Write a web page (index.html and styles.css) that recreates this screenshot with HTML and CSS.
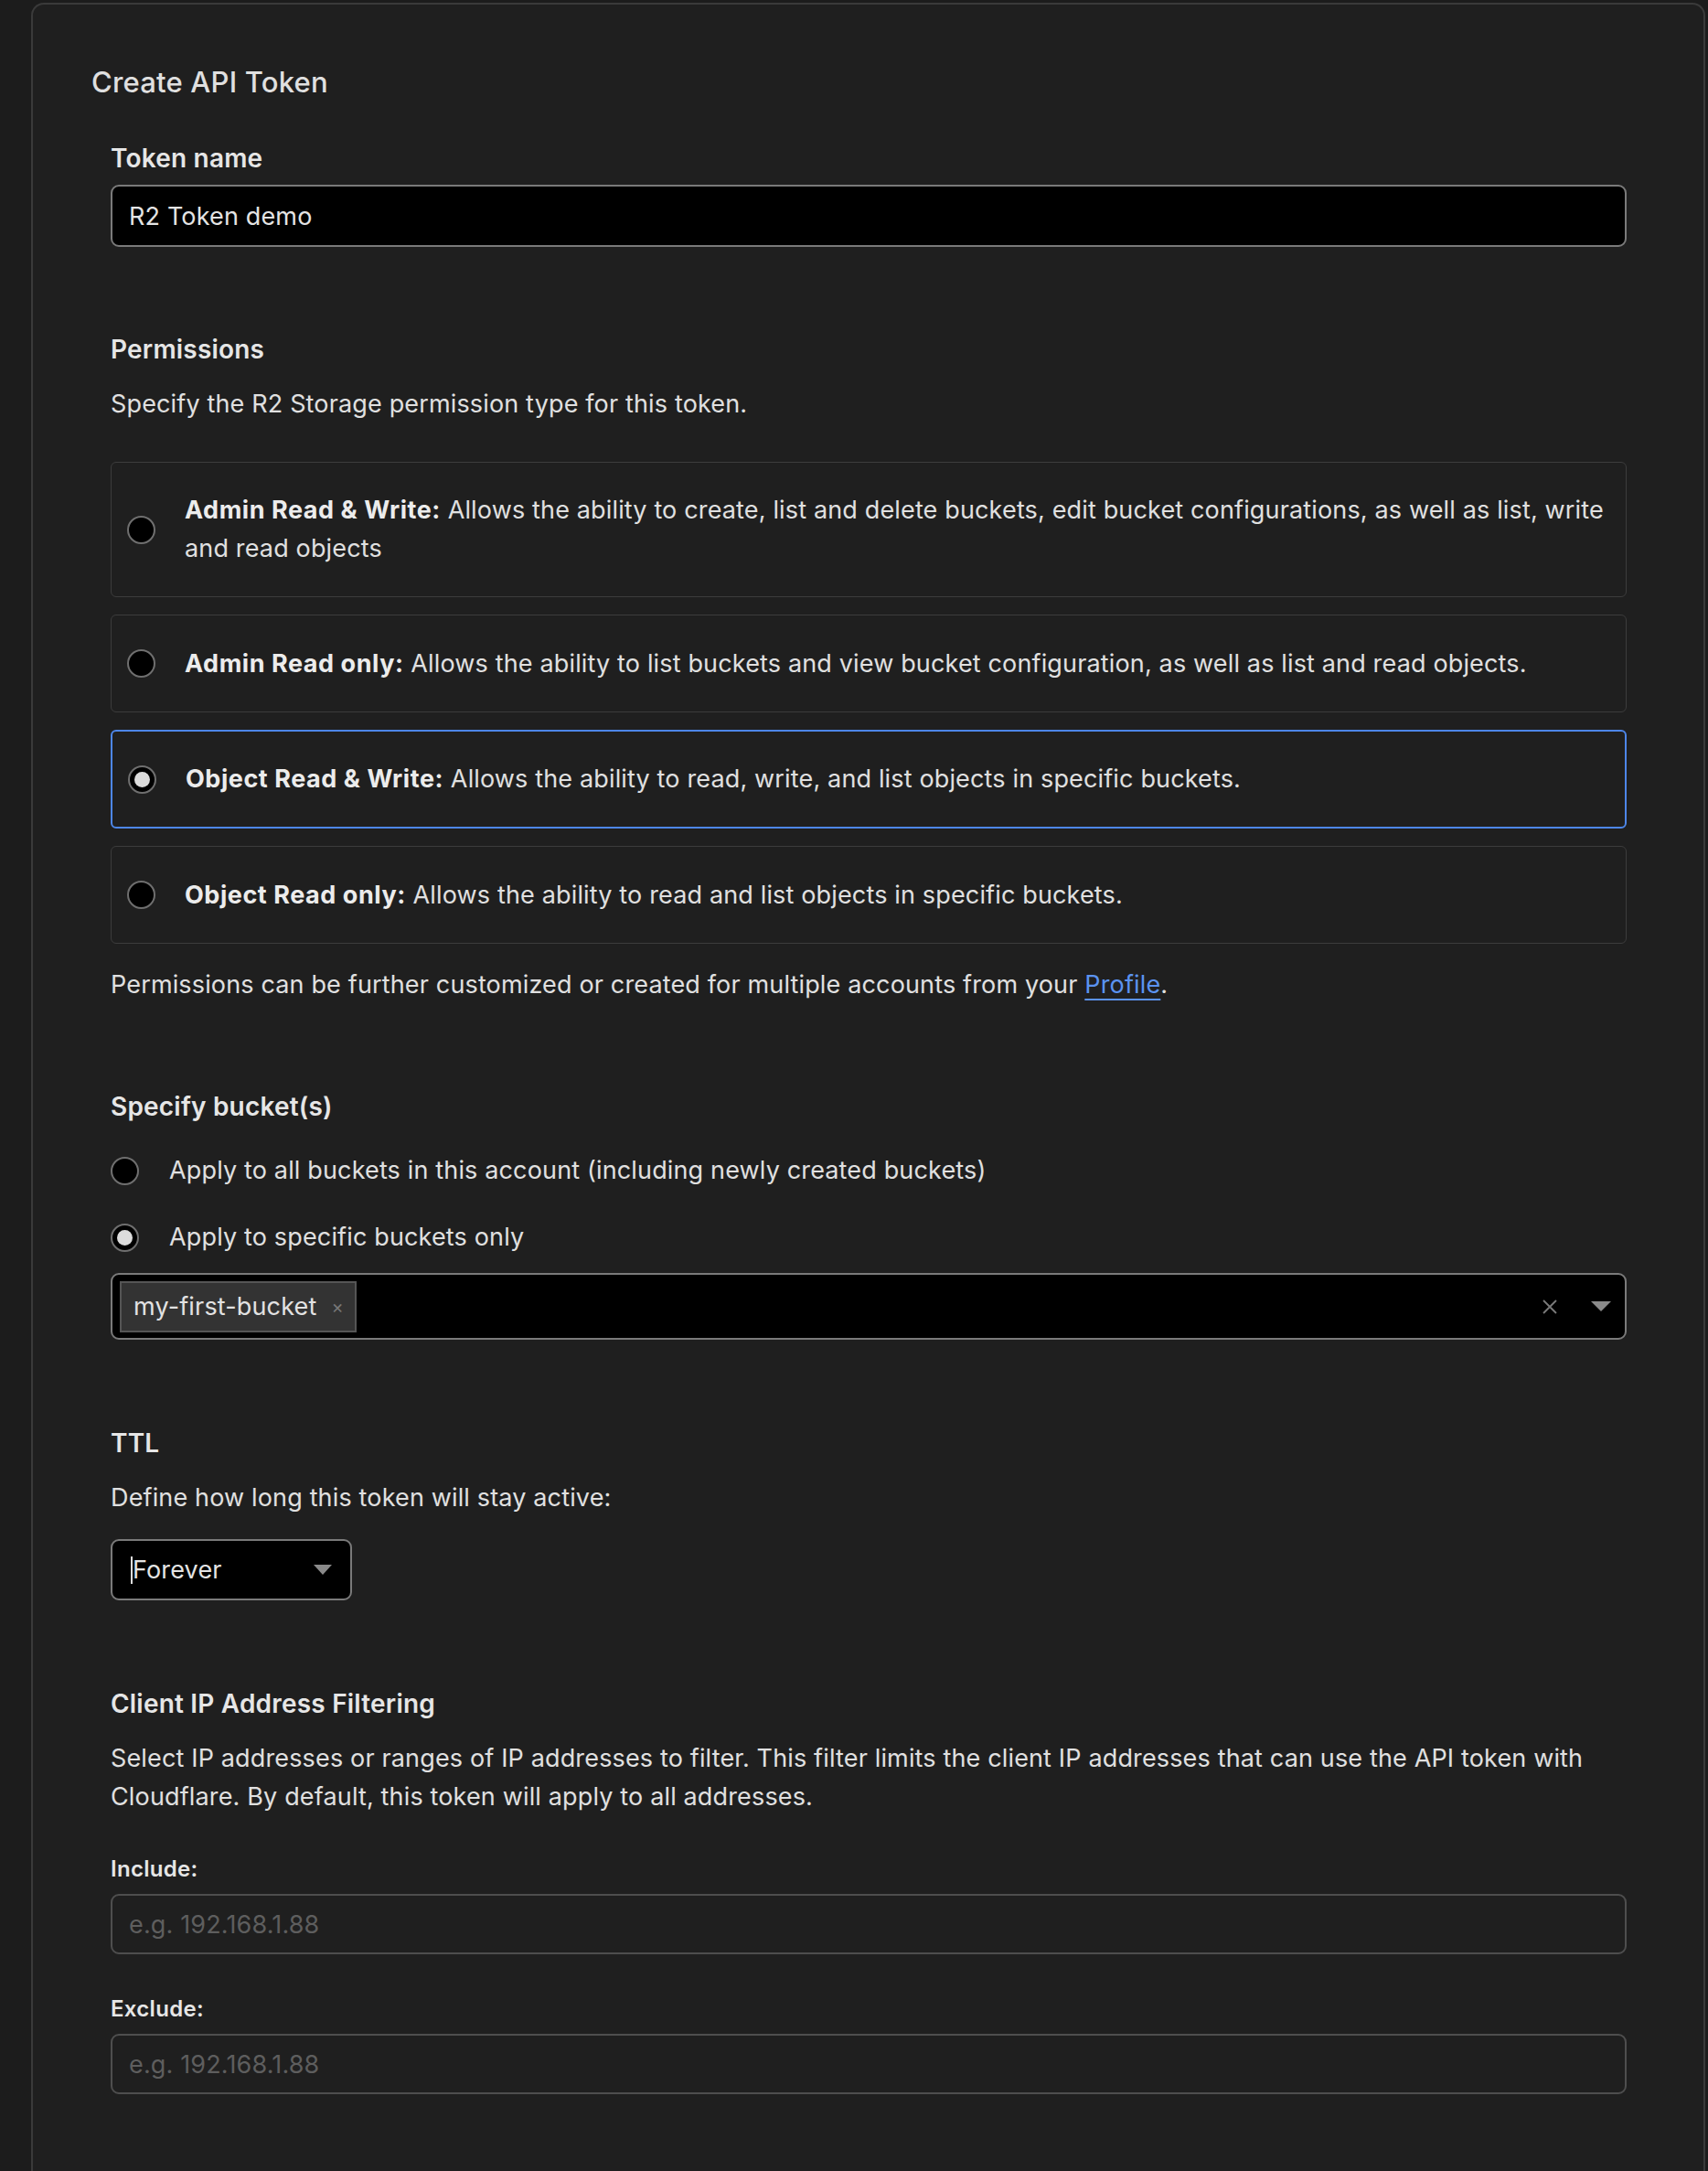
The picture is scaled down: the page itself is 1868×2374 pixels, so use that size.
FILE: index.html
```html
<!DOCTYPE html>
<html>
<head>
<meta charset="utf-8">
<link rel="stylesheet" href="styles.css">
</head>
<body>
<div class="card">
  <h1 class="title">Create API Token</h1>
  <div class="form">
    <div class="label mt-title">Token name</div>
    <div class="input input-dark mt-input">R2 Token demo</div>

    <div class="label mt-section">Permissions</div>
    <p class="text mt-desc">Specify the R2 Storage permission type for this token.</p>

    <div class="options">
      <div class="option">
        <span class="radio"></span>
        <p class="text"><b>Admin Read &amp; Write:</b> Allows the ability to create, list and delete buckets, edit bucket configurations, as well as list, write and read objects</p>
      </div>
      <div class="option">
        <span class="radio"></span>
        <p class="text"><b>Admin Read only:</b> Allows the ability to list buckets and view bucket configuration, as well as list and read objects.</p>
      </div>
      <div class="option selected">
        <span class="radio checked"></span>
        <p class="text"><b>Object Read &amp; Write:</b> Allows the ability to read, write, and list objects in specific buckets.</p>
      </div>
      <div class="option">
        <span class="radio"></span>
        <p class="text"><b>Object Read only:</b> Allows the ability to read and list objects in specific buckets.</p>
      </div>
    </div>

    <p class="text mt-note">Permissions can be further customized or created for multiple accounts from your <a class="link" href="#">Profile</a>.</p>

    <div class="label mt-section">Specify bucket(s)</div>
    <div class="radio-list">
      <div class="radio-row"><span class="radio"></span><span class="text">Apply to all buckets in this account (including newly created buckets)</span></div>
      <div class="radio-row"><span class="radio checked"></span><span class="text">Apply to specific buckets only</span></div>
    </div>
    <div class="multiselect">
      <span class="tag">my-first-bucket<span class="tag-x">×</span></span>
      <span class="ms-spacer"></span>
      <svg class="ms-clear" width="18" height="18" viewBox="0 0 18 18"><path d="M2 2L16 16M16 2L2 16" stroke="#7a7a7a" stroke-width="1.8" fill="none"/></svg>
      <svg class="ms-caret" width="22" height="12" viewBox="0 0 22 12"><path d="M0 0H22L11 11Z" fill="#8a8a8a"/></svg>
    </div>

    <div class="label mt-section2">TTL</div>
    <p class="text mt-desc">Define how long this token will stay active:</p>
    <div class="select">
      <span class="cursor"></span><span class="select-value">Forever</span>
      <svg class="select-caret" width="20" height="11" viewBox="0 0 20 11"><path d="M0 0H20L10 11Z" fill="#8a8a8a"/></svg>
    </div>

    <div class="label mt-section3">Client IP Address Filtering</div>
    <p class="text mt-desc">Select IP addresses or ranges of IP addresses to filter. This filter limits the client IP addresses that can use the API token with Cloudflare. By default, this token will apply to all addresses.</p>

    <div class="small-label mt-include">Include:</div>
    <div class="input input-empty mt-small">e.g. 192.168.1.88</div>
    <div class="small-label mt-exclude">Exclude:</div>
    <div class="input input-empty mt-small">e.g. 192.168.1.88</div>
  </div>
</div>
</body>
</html>
```

FILE: styles.css
```css
html, body {
  margin: 0;
  padding: 0;
}
body {
  background: #1c1c1c;
  font-family: Inter, "Noto Sans", sans-serif;
  color: #e2e2e2;
  height: 2374px;
  overflow: hidden;
}
.card {
  margin: 3px 0 0 34px;
  width: 1831px;
  height: 2420px;
  box-sizing: border-box;
  background: #1f1f1f;
  border: 2px solid #3a3a3a;
  border-bottom: none;
  border-radius: 14px 14px 0 0;
  padding: 65px 0 0 64px;
}
.title {
  margin: 0;
  font-size: 31px;
  font-weight: 500;
  letter-spacing: 0.2px;
  line-height: 40px;
  color: #e0e0e0;
}
.form {
  margin-left: 21px;
  width: 1658px;
}
.label {
  font-size: 28px;
  font-weight: 600;
  letter-spacing: 0.2px;
  line-height: 36px;
  color: #e6e6e6;
}
.small-label {
  font-size: 24px;
  font-weight: 600;
  letter-spacing: 0.3px;
  line-height: 30px;
  color: #e6e6e6;
}
.text {
  margin: 0;
  font-size: 27px;
  letter-spacing: 0.15px;
  line-height: 42px;
  color: #e0e0e0;
}
.text b { font-weight: 700; letter-spacing: 0.55px; color: #ececec; }
.mt-title { margin-top: 45px; }
.mt-input { margin-top: 11px; }
.mt-section { margin-top: 94px; }
.mt-section2 { margin-top: 95px; }
.mt-section3 { margin-top: 95px; }
.mt-desc { margin-top: 21px; }
.mt-note { margin-top: 24px; }
.mt-include { margin-top: 43px; }
.mt-exclude { margin-top: 45px; }
.mt-small { margin-top: 12px; }

.input {
  box-sizing: border-box;
  height: 68px;
  border-radius: 9px;
  display: flex;
  align-items: center;
  padding-left: 18px;
  font-size: 27px;
  letter-spacing: 0.15px;
}
.input-dark {
  background: #000;
  border: 2px solid #7a7a7a;
  color: #e4e4e4;
}
.input-empty {
  height: 66px;
  background: #1f1f1f;
  border: 2px solid #4e4e4e;
  color: #5e5e5e;
}

.options {
  margin-top: 42px;
  display: flex;
  flex-direction: column;
  gap: 19px;
}
.option {
  box-sizing: border-box;
  min-height: 107px;
  border: 1.5px solid #3c3c3c;
  border-radius: 6px;
  padding: 31px 18px 31px 17px;
  display: flex;
  align-items: center;
  gap: 32px;
}
.option.selected {
  border: 2px solid #4d86e8;
}
.radio {
  flex: none;
  box-sizing: border-box;
  width: 31px;
  height: 31px;
  border-radius: 50%;
  background: #000;
  border: 2px solid #6f6f6f;
  position: relative;
}
.radio.checked::after {
  content: "";
  position: absolute;
  left: 5px;
  top: 5px;
  width: 17px;
  height: 17px;
  border-radius: 50%;
  background: #dcdcdc;
}

.link {
  color: #5b93f0;
  text-decoration: underline;
  text-underline-offset: 6px;
  text-decoration-thickness: 2px;
}

.radio-list {
  margin-top: 31px;
  display: flex;
  flex-direction: column;
  gap: 31px;
}
.radio-row {
  display: flex;
  align-items: center;
  gap: 33px;
}

.multiselect {
  margin-top: 18px;
  box-sizing: border-box;
  height: 73px;
  background: #000;
  border: 2px solid #7a7a7a;
  border-radius: 9px;
  display: flex;
  align-items: center;
  padding: 0 15px 0 8px;
}
.tag {
  box-sizing: border-box;
  height: 56px;
  display: flex;
  align-items: center;
  padding: 0 12px 0 13px;
  background: #333;
  border: 2px solid #555;
  font-size: 27px;
  letter-spacing: 0.15px;
  color: #e2e2e2;
}
.tag-x {
  margin-left: 16px;
  font-size: 20px;
  color: #777;
}
.ms-spacer { flex: 1; }
.ms-clear { margin-right: 36px; }

.select {
  margin-top: 24px;
  box-sizing: border-box;
  width: 264px;
  height: 67px;
  background: #000;
  border: 2px solid #7a7a7a;
  border-radius: 9px;
  display: flex;
  align-items: center;
  padding: 0 20px 0 20px;
  font-size: 27px;
  letter-spacing: 0.15px;
  color: #e4e4e4;
}
.cursor {
  width: 2px;
  height: 30px;
  background: #ddd;
}
.select-value { flex: 1; }
```
